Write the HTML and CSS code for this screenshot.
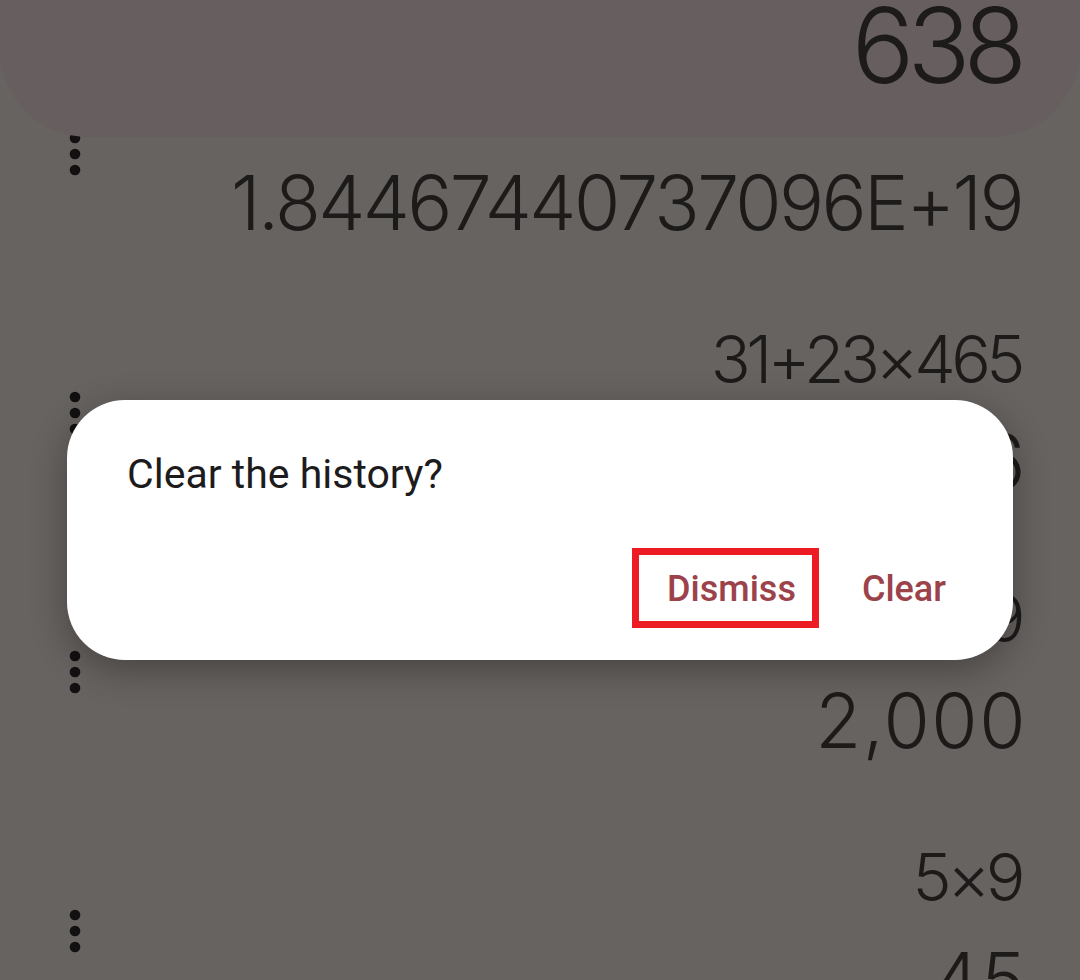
FILE: index.html
```html
<!DOCTYPE html>
<html lang="en">
<head>
<meta charset="utf-8">
<title>Calculator history</title>
<link rel="stylesheet" href="styles.css">
</head>
<body>
<main class="app">
  <section class="history">
    <div class="item">
      <svg class="more" viewBox="0 0 24 24"><circle cx="12" cy="6" r="2"/><circle cx="12" cy="12" r="2"/><circle cx="12" cy="18" r="2"/></svg>
      <div class="calc">
        <div class="expr">2^64</div>
        <div class="res res-long">1.84467440737096E+19</div>
      </div>
    </div>
    <div class="item">
      <svg class="more" viewBox="0 0 24 24"><circle cx="12" cy="6" r="2"/><circle cx="12" cy="12" r="2"/><circle cx="12" cy="18" r="2"/></svg>
      <div class="calc">
        <div class="expr">31+23×465</div>
        <div class="res">10,726</div>
      </div>
    </div>
    <div class="item">
      <svg class="more" viewBox="0 0 24 24"><circle cx="12" cy="6" r="2"/><circle cx="12" cy="12" r="2"/><circle cx="12" cy="18" r="2"/></svg>
      <div class="calc">
        <div class="expr">1001+999</div>
        <div class="res">2,000</div>
      </div>
    </div>
    <div class="item">
      <svg class="more" viewBox="0 0 24 24"><circle cx="12" cy="6" r="2"/><circle cx="12" cy="12" r="2"/><circle cx="12" cy="18" r="2"/></svg>
      <div class="calc">
        <div class="expr">5×9</div>
        <div class="res">45</div>
      </div>
    </div>
  </section>
  <header class="display"><span class="display-value">638</span></header>
</main>
<div class="scrim">
  <div class="dialog" role="dialog">
    <p class="title">Clear the history?</p>
    <div class="actions">
      <button class="btn btn-dismiss">Dismiss</button>
      <button class="btn btn-clear">Clear</button>
    </div>
  </div>
</div>
</body>
</html>
```
FILE: styles.css
```css
html, body {
  margin: 0;
  padding: 0;
}
body {
  width: 1080px;
  height: 980px;
  overflow: hidden;
  position: relative;
  background: #676361;
  font-family: Roboto, "Noto Sans", sans-serif;
}
.app {
  position: relative;
  height: 980px;
  overflow: hidden;
}
.history {
  padding-top: 24px;
}
.item {
  display: flex;
  align-items: center;
  box-sizing: border-box;
  height: 259px;
  padding: 36px 58px 35px 43px;
}
.more {
  width: 64px;
  height: 64px;
  flex: none;
  fill: #121010;
}
.calc {
  flex: 1;
  text-align: right;
  color: #1d1a1a;
  font-family: Inter, Roboto, sans-serif;
  font-weight: 350;
}
.expr {
  font-size: 66px;
  line-height: 80px;
  letter-spacing: -4.5px;
  margin-right: 1px;
}
.res {
  font-size: 75px;
  line-height: 90px;
  margin-top: 18px;
  letter-spacing: 1.5px;
  margin-right: -5px;
}
.res-long {
  letter-spacing: -2.6px;
  margin-right: 0;
}
.display {
  position: absolute;
  top: 0;
  left: 0;
  right: 0;
  height: 137px;
  box-sizing: border-box;
  background: #675e5f;
  border-radius: 0 0 88px 88px;
  padding-right: 60px;
  text-align: right;
  color: #1d1a1a;
  font-family: Inter, Roboto, sans-serif;
  font-weight: 350;
  font-size: 104px;
  line-height: 90px;
  letter-spacing: -7px;
}
.scrim {
  position: absolute;
  inset: 0;
  box-sizing: border-box;
  padding: 400px 67px 0;
}
.dialog {
  background: #ffffff;
  border-radius: 58px;
  padding: 50px 44px 32px 60px;
  box-shadow: 0 10px 36px rgba(0, 0, 0, 0.32);
}
.title {
  margin: 0;
  font-size: 41px;
  line-height: 48px;
  color: #1d1b1c;
}
.actions {
  display: flex;
  justify-content: flex-end;
  align-items: center;
  gap: 26px;
  margin-top: 50px;
}
.btn {
  font-family: Roboto, sans-serif;
  font-weight: 500;
  font-size: 36px;
  line-height: 64px;
  color: #9c424a;
  background: none;
  border: 7px solid transparent;
  margin: 0;
}
.btn-dismiss {
  border-color: #ed1c24;
  padding: 2px 16px 0 28px;
}
.btn-clear {
  padding: 2px 16px 0 10px;
}
```
